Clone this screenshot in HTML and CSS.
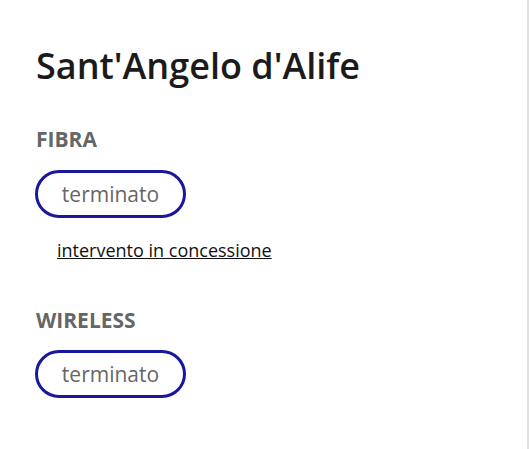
FILE: index.html
```html
<!DOCTYPE html>
<html lang="it">
<head>
<meta charset="utf-8">
<link rel="stylesheet" href="styles.css">
</head>
<body>
<div class="panel">
  <h1 class="title">Sant'Angelo d'Alife</h1>
  <section class="group">
    <h2 class="label">FIBRA</h2>
    <span class="pill">terminato</span>
    <a class="link" href="#">intervento in concessione</a>
  </section>
  <section class="group">
    <h2 class="label">WIRELESS</h2>
    <span class="pill">terminato</span>
  </section>
</div>
</body>
</html>
```
FILE: styles.css
```css
html, body { margin: 0; padding: 0; background: #fff; }
body { font-family: "Open Sans", "Noto Sans", sans-serif; }
.panel {
  width: 529px;
  height: 449px;
  box-sizing: border-box;
  border-right: 2px solid #e2e2e2;
  padding: 40px 0 0 36px;
}
.title {
  margin: 0;
  font-size: 36px;
  font-weight: 600;
  color: #1b1b1b;
  line-height: 52px;
}
.group { display: flex; flex-direction: column; align-items: flex-start; }
.label {
  margin: 34px 0 0;
  font-size: 21px;
  font-weight: 700;
  color: #666;
  line-height: 26px;
}
.pill {
  margin-top: 18px;
  margin-left: -1px;
  box-sizing: border-box;
  width: 151px;
  height: 48px;
  border: 3px solid #18189c;
  border-radius: 24px;
  display: flex;
  align-items: center;
  justify-content: center;
  font-size: 21px;
  color: #666;
}
.link {
  margin: 20px 0 0 21px;
  font-size: 18px;
  color: #111;
  text-decoration: underline;
  line-height: 24px;
}
.group + .group .label { margin-top: 45px; }
.group + .group .pill { margin-top: 17px; }
```
